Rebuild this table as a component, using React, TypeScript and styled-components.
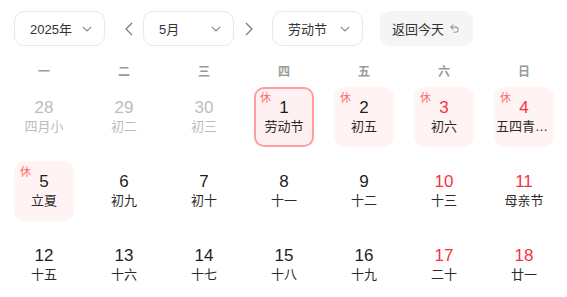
import React from "react";
import styled, { createGlobalStyle, css } from "styled-components";

const GlobalStyle = createGlobalStyle`
  html, body { margin: 0; padding: 0; background: #fff; }
  body { font-family: "Liberation Sans", "Noto Sans CJK SC", sans-serif; color: #222; }
  * { box-sizing: border-box; }
`;

const Page = styled.div`
  width: 567px;
  height: 297px;
  padding: 11px 3px 0 4px;
  overflow: hidden;
`;

const Toolbar = styled.div`
  display: flex;
  align-items: center;
  height: 35px;
  padding-left: 10px;
`;

const Select = styled.div`
  width: 91px;
  height: 35px;
  border: 1px solid #e8e8e8;
  border-radius: 10px;
  display: flex;
  align-items: center;
  justify-content: space-between;
  padding: 0 12px 0 15px;
  font-size: 13px;
  color: #333;
  background: #fff;
`;

const NavArrow = styled.div<{ $side: "prev" | "next" }>`
  width: 20px;
  height: 35px;
  display: flex;
  align-items: center;
  justify-content: center;
  color: #777;
  ${(p) =>
    p.$side === "prev"
      ? css`margin: 0 4px 0 14px;`
      : css`margin: 0 13px 0 5px;`}
`;

const Spacer = styled.div<{ $w: number }>`
  width: ${(p) => p.$w}px;
  flex: none;
`;

const TodayButton = styled.div`
  height: 35px;
  border-radius: 10px;
  background: #f5f5f5;
  display: flex;
  align-items: center;
  gap: 5px;
  padding: 0 13px 0 12px;
  font-size: 13px;
  color: #333;
`;

const WeekRow = styled.div`
  display: grid;
  grid-template-columns: repeat(7, 80px);
  margin-top: 14px;
  height: 20px;
  align-items: center;
`;

const WeekDay = styled.div`
  text-align: center;
  font-size: 12px;
  font-weight: 600;
  color: #9a9a9a;
  font-family: "Noto Sans CJK SC", sans-serif;
`;

const Grid = styled.div`
  display: grid;
  grid-template-columns: repeat(7, 80px);
  row-gap: 14px;
  margin-top: 7px;
  justify-items: center;
`;

const Cell = styled.div<{ $holiday?: boolean; $selected?: boolean }>`
  position: relative;
  width: 60px;
  height: 60px;
  border-radius: 10px;
  display: flex;
  flex-direction: column;
  align-items: center;
  padding-top: 11px;
  border: 2px solid transparent;
  ${(p) =>
    p.$holiday &&
    css`
      background: #fff3f3;
      border-color: #fff3f3;
    `}
  ${(p) =>
    p.$selected &&
    css`
      background: #fff1f1;
      border-color: #ff9e9e;
    `}
`;

const DayNum = styled.div<{ $tone: "normal" | "red" | "muted" }>`
  font-size: 17px;
  line-height: 18px;
  height: 18px;
  margin-top: -1px;
  color: ${(p) => (p.$tone === "red" ? "#f5333f" : p.$tone === "muted" ? "#bcbcbc" : "#1e1e1e")};
`;

const Lunar = styled.div<{ $muted?: boolean }>`
  font-size: 13px;
  line-height: 18px;
  margin-top: 1px;
  max-width: 56px;
  white-space: nowrap;
  overflow: hidden;
  text-overflow: ellipsis;
  font-family: "Liberation Sans", "Noto Sans CJK SC", sans-serif;
  color: ${(p) => (p.$muted ? "#bcbcbc" : "#2a2a2a")};
`;

const RestBadge = styled.span`
  position: absolute;
  left: 4px;
  top: 2px;
  font-size: 11px;
  line-height: 13px;
  color: #ff6b6b;
  font-family: "Noto Sans CJK SC", sans-serif;
`;

const Chevron = () => (
  <svg width="10" height="6" viewBox="0 0 10 6" fill="none">
    <polyline points="0.8,0.8 5,5 9.2,0.8" stroke="#888" strokeWidth="1.1" />
  </svg>
);

const ArrowIcon = ({ dir }: { dir: "left" | "right" }) => (
  <svg width="8" height="14" viewBox="0 0 8 14" fill="none">
    <polyline
      points={dir === "left" ? "7,1 1,7 7,13" : "1,1 7,7 1,13"}
      stroke="#777"
      strokeWidth="1.2"
    />
  </svg>
);

const UndoIcon = () => (
  <svg width="11" height="11" viewBox="0 0 24 24" fill="none" stroke="#999" strokeWidth="2.2" strokeLinecap="round" strokeLinejoin="round">
    <path d="M9 14 4 9l5-5" />
    <path d="M4 9h10.5a5.5 5.5 0 0 1 5.5 5.5a5.5 5.5 0 0 1-5.5 5.5H11" />
  </svg>
);

type Day = {
  n: number;
  lunar: string;
  muted?: boolean;
  rest?: boolean;
  selected?: boolean;
};

const days: Day[] = [
  { n: 28, lunar: "四月小", muted: true },
  { n: 29, lunar: "初二", muted: true },
  { n: 30, lunar: "初三", muted: true },
  { n: 1, lunar: "劳动节", rest: true, selected: true },
  { n: 2, lunar: "初五", rest: true },
  { n: 3, lunar: "初六", rest: true },
  { n: 4, lunar: "五四青年节", rest: true },
  { n: 5, lunar: "立夏", rest: true },
  { n: 6, lunar: "初九" },
  { n: 7, lunar: "初十" },
  { n: 8, lunar: "十一" },
  { n: 9, lunar: "十二" },
  { n: 10, lunar: "十三" },
  { n: 11, lunar: "母亲节" },
  { n: 12, lunar: "十五" },
  { n: 13, lunar: "十六" },
  { n: 14, lunar: "十七" },
  { n: 15, lunar: "十八" },
  { n: 16, lunar: "十九" },
  { n: 17, lunar: "二十" },
  { n: 18, lunar: "廿一" },
];

const weekDays = ["一", "二", "三", "四", "五", "六", "日"];

export default function App() {
  return (
    <>
      <GlobalStyle />
      <Page>
        <Toolbar>
          <Select>
            <span>2025年</span>
            <Chevron />
          </Select>
          <NavArrow $side="prev">
            <ArrowIcon dir="left" />
          </NavArrow>
          <Select>
            <span>5月</span>
            <Chevron />
          </Select>
          <NavArrow $side="next">
            <ArrowIcon dir="right" />
          </NavArrow>
          <Select>
            <span>劳动节</span>
            <Chevron />
          </Select>
          <Spacer $w={17} />
          <TodayButton>
            <span>返回今天</span>
            <UndoIcon />
          </TodayButton>
        </Toolbar>
        <WeekRow>
          {weekDays.map((w) => (
            <WeekDay key={w}>{w}</WeekDay>
          ))}
        </WeekRow>
        <Grid>
          {days.map((d, i) => {
            const col = i % 7;
            const weekend = col >= 5;
            const tone = d.muted ? "muted" : weekend ? "red" : "normal";
            return (
              <Cell key={i} $holiday={d.rest} $selected={d.selected}>
                {d.rest && <RestBadge>休</RestBadge>}
                <DayNum $tone={tone}>{d.n}</DayNum>
                <Lunar $muted={d.muted}>{d.lunar}</Lunar>
              </Cell>
            );
          })}
        </Grid>
      </Page>
    </>
  );
}
